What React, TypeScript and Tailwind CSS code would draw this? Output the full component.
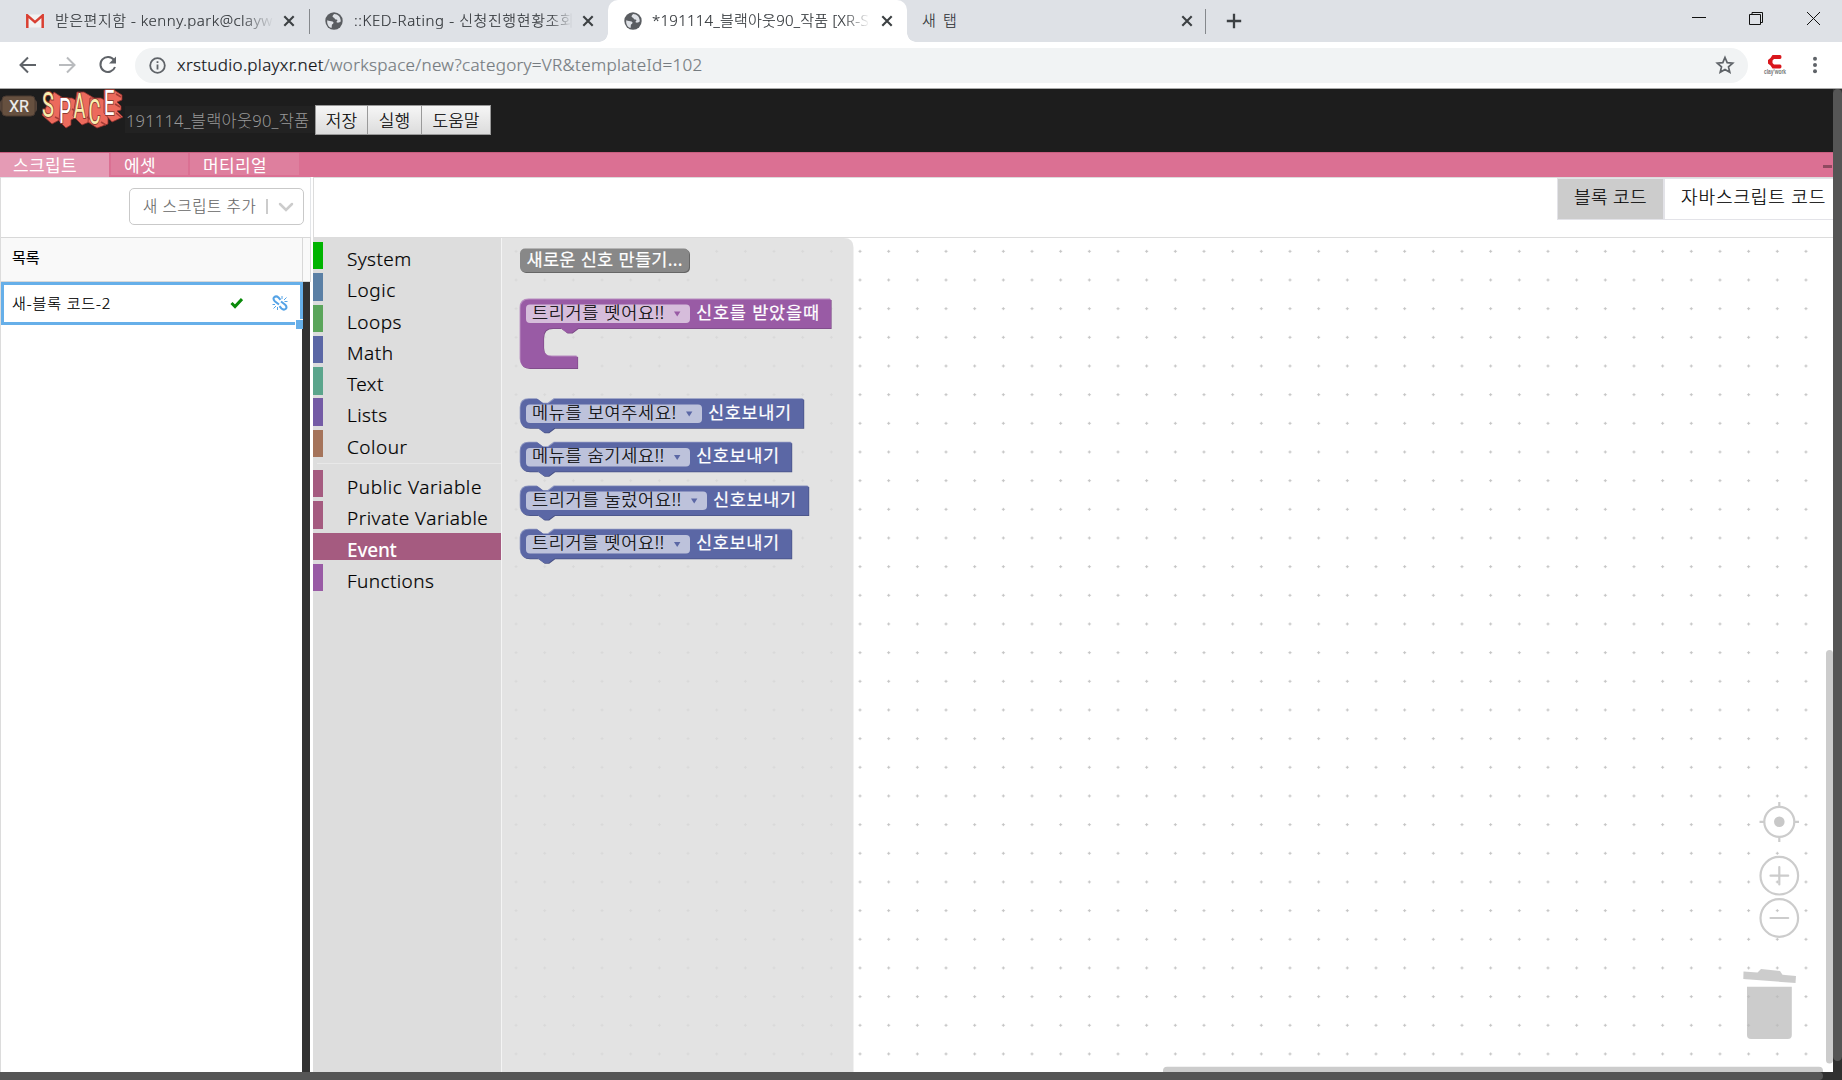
import React from "react";

const uiFont = "font-['Noto_Sans','Noto_Sans_CJK_KR',sans-serif]";

function Globe() {
  return (
    <svg width="18" height="18" viewBox="0 0 18 18" className="shrink-0">
      <circle cx="9" cy="9" r="8.7" fill="#5a5d61" />
      <path d="M2.3 8.2 C4 9.2 6 8.6 7.6 9.6 C9.4 10.6 8.2 12 7 12.6 C6.6 14 7 15.4 6.4 16 C3.6 15 1.6 12 2.3 8.2Z M9.2 2 C7.6 3.4 6.8 4.6 8.4 5.4 C9.6 5.6 9.6 7.2 11 7.4 C12.6 7.2 12.8 8.8 11.6 9.6 C10.8 10.4 12.6 10.8 13.6 10.6 C14.6 10.4 15 9.4 15.8 9.4 C15.8 5 13 2 9.2 2Z" fill="#dee1e6" />
    </svg>
  );
}

function TabClose() {
  return (
    <svg width="12" height="12" viewBox="0 0 12 12" className="shrink-0">
      <path d="M1.3 1.3 10.7 10.7M10.7 1.3 1.3 10.7" stroke="#3c4043" strokeWidth="2.1" />
    </svg>
  );
}

function TabStrip() {
  return (
    <div className="flex h-[42px] items-stretch bg-[#dee1e6] text-[15px] font-light text-[#303438] [-webkit-text-stroke:0.15px]">
      <div className="flex w-[309px] items-center pl-[26px]">
        <svg width="18" height="14" viewBox="0 0 18 14" className="shrink-0">
          <rect x="1" y="0.5" width="16" height="13" fill="#f2f2f2" />
          <path d="M1.3 14V1.4L9 8.2 16.7 1.4V14" fill="none" stroke="#d93f32" strokeWidth="2.5" />
        </svg>
        <span className="mb-[2px] ml-[11px] w-[219px] overflow-hidden tracking-[0.5px] whitespace-nowrap [mask-image:linear-gradient(to_right,black_85%,transparent)]">받은편지함 - kenny.park@clayw</span>
        <span className="ml-[9px] flex"><TabClose /></span>
      </div>
      <div className="h-[25px] w-px self-center bg-[#85888c]" />
      <div className="flex w-[298px] items-center pl-[15px]">
        <Globe />
        <span className="mb-[2px] ml-[11px] w-[219px] overflow-hidden tracking-[0.6px] whitespace-nowrap [mask-image:linear-gradient(to_right,black_90%,transparent)]">::KED-Rating - 신청진행현황조회</span>
        <span className="ml-[9px] flex"><TabClose /></span>
      </div>
      <div className="relative flex w-[299px] items-center rounded-t-[10px] bg-white pl-[16px]">
        <i className="absolute bottom-0 -left-[9px] size-[9px] bg-[radial-gradient(circle_at_0_0,transparent_8.5px,white_9px)]" />
        <i className="absolute -right-[9px] bottom-0 size-[9px] bg-[radial-gradient(circle_at_100%_0,transparent_8.5px,white_9px)]" />
        <Globe />
        <span className="mb-[2px] ml-[10px] w-[218px] overflow-hidden tracking-[0.25px] whitespace-nowrap [mask-image:linear-gradient(to_right,black_88%,transparent)]">*191114_블랙아웃90_작품 [XR-S</span>
        <span className="ml-[11px] flex"><TabClose /></span>
      </div>
      <div className="flex w-[298px] items-center justify-between pr-[12px] pl-[15px]">
        <span className="mb-[2px] tracking-[1.6px]">새 탭</span>
        <TabClose />
      </div>
      <div className="h-[25px] w-px self-center bg-[#85888c]" />
      <svg width="16" height="16" viewBox="0 0 16 16" className="ml-[20px] self-center">
        <path d="M8 .8V15.2M.8 8H15.2" stroke="#3c4043" strokeWidth="2.3" />
      </svg>
      <svg width="130" height="16" viewBox="0 0 130 16" className="mt-[10px] mr-[21px] ml-auto" fill="none" stroke="#111">
        <path d="M1 7.5H15" />
        <path d="M58.500 4.500H69.500V14.500H58.500ZM61 4.500V2.500H71.500V12.500H70" />
        <path d="M116 2 129 15M129 2 116 15" />
      </svg>
    </div>
  );
}

function AddressBar() {
  return (
    <div className="flex h-[47px] items-center border-b border-[#a9a9a9] bg-white">
      <svg width="102" height="24" viewBox="0 0 102 24" className="mr-[15px] ml-[18px]" fill="none" strokeWidth="2">
        <path d="M18 12H3M10 4.500 2.500 12 10 19.500" stroke="#5f6368" />
        <path d="M41 12H56M49 4.500 56.500 12 49 19.500" stroke="#b9bbbe" />
        <path d="M96 7A7.500 7.500 0 1 0 97 14" stroke="#5f6368" />
        <path d="M98 3.500V10.500H91Z" fill="#5f6368" />
      </svg>
      <div className="flex h-[35px] w-[1613px] items-center rounded-full bg-[#f1f3f4] pr-[13px] pl-[14px]">
        <svg width="17" height="17" viewBox="0 0 17 17" fill="none" stroke="#5f6368" strokeWidth="1.8">
          <circle cx="8.500" cy="8.500" r="7.300" />
          <path d="M8.500 7.500V12.500M8.500 4.300V6.100" />
        </svg>
        <span className="ml-[11px] text-[17px] font-light tracking-[0.32px] whitespace-nowrap text-[#757b80] [-webkit-text-stroke:0.2px]"><span className="text-[#101114]">xrstudio.playxr.net</span>/workspace/new?category=VR&amp;templateId=102</span>
        <svg width="20" height="20" viewBox="0 0 20 20" className="ml-auto">
          <path d="M10 2.500 12.200 7.700 17.700 8.200 13.500 11.900 14.800 17.300 10 14.400 5.200 17.300 6.500 11.900 2.300 8.200 7.800 7.700Z" fill="none" stroke="#5f6368" strokeWidth="1.700" />
        </svg>
      </div>
      <svg width="24" height="24" viewBox="0 0 24 24" className="ml-[15px]">
        <path d="M17 2H9.500L7.500 5 5 7V10.500L7.500 12.500 9.500 15.500H17Q18.500 15.500 18.500 13.500T17 11.500H11L9.500 10V7.500L11 6H17Q18.500 6 18.500 4T17 2Z" fill="#d9161c" />
        <text x="1" y="21" fontSize="7" fontWeight="700" textLength="22" lengthAdjust="spacingAndGlyphs" fill="#777" fontFamily="Liberation Sans">clay'work</text>
      </svg>
      <svg width="6" height="20" viewBox="0 0 6 20" className="ml-[25px]" fill="#5f6368">
        <circle cx="3" cy="3.700" r="2" /><circle cx="3" cy="10" r="2" /><circle cx="3" cy="16.300" r="2" />
      </svg>
    </div>
  );
}

const logoLetters = [
  { c: "S", x: 42, y: 28, w: 12, f: "#f8efb0" },
  { c: "P", x: 59, y: 34, w: 12, f: "#fff" },
  { c: "A", x: 73.5, y: 29, w: 12, f: "#f8efb0" },
  { c: "C", x: 88.5, y: 35, w: 12, f: "#f8efb0" },
  { c: "E", x: 104, y: 26, w: 10.5, f: "#fff" },
];

function Logo() {
  return (
    <svg width="125" height="40" viewBox="0 0 125 40" className="shrink-0 self-start">
      <rect x="0" y="11" width="37" height="12" rx="3" fill="#55443a" />
      <rect x="2" y="7" width="33" height="20" rx="4" fill="#66503f" stroke="#4a3a31" />
      <text x="9" y="22.500" fontSize="16" textLength="20" lengthAdjust="spacingAndGlyphs" fill="#eee" stroke="#eee" strokeWidth=".2" fontFamily="Roboto">XR</text>
      <g fill="#ec6a5c" stroke="#8e2f2c" strokeWidth=".8">
        <path d="M42 26 54 3 63 9V29L52 35Z" />
        <path d="M59 32 61 9 72 9 79 13V27L71 31V36L66 39Z" />
        <path d="M73 27 77 3 84 3 94 9V31L82 36Z" />
        <path d="M88 33 90 9 101 9 108 13V35L97 39Z" />
        <path d="M104 24V1L114 1 122 6V11L117 13 121 17V21L117 22 123 28 112 33Z" />
      </g>
      <path d="M55 28 61 31M72 20 77 23M87 28 92 31M101 33 106 36M116 5 121 8M115 15 120 18M116 24 121 28" stroke="#a63c36" strokeWidth="1.500" />
      <g fontFamily="Roboto" fontWeight="400" fontSize="35" stroke="#8e3a32" strokeWidth="2" paintOrder="stroke">
        {logoLetters.map((l) => (
          <text key={l.c} x={l.x} y={l.y} textLength={l.w} lengthAdjust="spacingAndGlyphs" fill={l.f}>{l.c}</text>
        ))}
      </g>
    </svg>
  );
}

function StudioHeader() {
  const button = "h-[30px] border border-[#999] bg-linear-to-b from-[#f6f6f6] to-[#dcdcdc] text-[17px] leading-[27px] font-light text-black [-webkit-text-stroke:0.2px]";
  return (
    <header className="flex h-[63px] bg-[#1d1d1d]">
      <Logo />
      <div className="mt-[17px] h-[27px] w-[190px] bg-[#222] pl-[1px] text-[16.500px] leading-[29px] font-light tracking-[0.2px] whitespace-nowrap text-[#999]">191114_블랙아웃90_작품</div>
      <div className="mt-4 flex">
        <button className={button + " w-[53px]"}>저장</button>
        <button className={button + " w-[54px] border-l-0"}>실행</button>
        <button className={button + " w-[69px] border-l-0"}>도움말</button>
      </div>
    </header>
  );
}

function SectionTabs() {
  return (
    <nav className="flex h-[25px] border-t border-[#c95f80] bg-[#db7093] text-[17px] leading-[25px] tracking-[0.4px] text-white">
      <div className="w-[109px] bg-[#e59bb5] pl-[13px]">스크립트</div>
      <div className="ml-[2px] h-[22px] w-[77px] bg-[#de7f9e] pl-[13px]">에셋</div>
      <div className="ml-[2px] h-[22px] w-[109px] bg-[#de7f9e] pl-[13px]">머티리얼</div>
      <div className="mt-[12px] mr-px ml-auto h-[3px] w-[9px] bg-[#8f4a60]" />
    </nav>
  );
}

function ScriptPanel() {
  return (
    <aside className="flex w-[311px] shrink-0 flex-col border-l border-[#dcdcdc]">
      <div className="flex h-[60px] justify-end border-t border-r border-[#e3e5e8] pt-[10px] pr-[6px]">
        <div className="flex h-[37px] w-[175px] items-center rounded-[5px] border border-[#c9c9c9] pl-[13px] text-[15.500px] font-light tracking-[0.6px] text-[#666] [-webkit-text-stroke:0.15px]">
          <span className="w-[123px] whitespace-nowrap">새 스크립트 추가</span>
          <span className="h-[15px] w-[2px] bg-[#ccc]" />
          <svg width="16" height="10" viewBox="0 0 16 10" className="ml-[10px]"><path d="M2 2 8 8 14 2" fill="none" stroke="#ccc" strokeWidth="2.500" strokeLinecap="round" /></svg>
        </div>
      </div>
      <div className="flex h-[45px] border-y border-r border-[#d8d8d8] bg-[#f9f9f9] text-[15px] leading-[39px] text-black">
        <div className="w-[302px] border-r border-[#d8d8d8] pl-[11px] [-webkit-text-stroke:0.2px]">목록</div>
      </div>
      <div className="flex flex-1">
        <div className="w-[301px]">
          <div className="relative flex h-[43px] w-[302px] items-center border-[3px] border-[#66afe9] pl-[8px] text-[15px] font-light text-black">
            <span className="mb-[1px] w-[218px] shrink-0 tracking-[0.9px] whitespace-nowrap [-webkit-text-stroke:0.2px]">새-블록 코드-2</span>
            <svg width="13" height="12" viewBox="0 0 13 12" className="mb-px shrink-0"><path d="M1.500 6 5 9.500 12 2" fill="none" stroke="#0a8a0a" strokeWidth="3" /></svg>
            <svg width="16" height="16" viewBox="0 0 16 16" className="mb-[2px] ml-[29px] shrink-0" fill="none" stroke="#55a3e6">
              <path d="M7 9.500 2.800 6.200Q.600 4 2.200 2.200 4.200.400 6.500 2.500L8.500 4.800M9 6.500 13.200 9.800Q15.400 12 13.800 13.800 11.800 15.600 9.500 13.500L7.500 11.200" strokeWidth="2" />
              <path d="M10 4V1M12 5 14.500 2.500M12.500 6.500H15.500M5.500 12V15M4 11 1.500 13.500M3 9.500H.500" strokeWidth="1" />
            </svg>
            <i className="absolute -right-[3px] -bottom-[7px] h-[10px] w-[8px] border-t border-l border-white bg-[#66afe9]" />
          </div>
        </div>
        <div className="w-[8px] bg-[#323232]" />
      </div>
    </aside>
  );
}

const categories = [
  { name: "System", bar: "bg-[#00b400]", tracking: "tracking-[0.4px]" },
  { name: "Logic", bar: "bg-[#5b80a5]", tracking: "tracking-[0.6px]" },
  { name: "Loops", bar: "bg-[#5ba55b]", tracking: "tracking-[0.5px]" },
  { name: "Math", bar: "bg-[#5b67a5]", tracking: "tracking-[0.5px]" },
  { name: "Text", bar: "bg-[#5ba58c]", tracking: "tracking-[0.5px]" },
  { name: "Lists", bar: "bg-[#745ba5]", tracking: "tracking-[0.4px]" },
  { name: "Colour", bar: "bg-[#a5745b]", tracking: "tracking-[0.5px]" },
  { name: "Public Variable", bar: "bg-[#a55b80]", tracking: "tracking-[0.6px]", gap: true },
  { name: "Private Variable", bar: "bg-[#a55b80]", tracking: "tracking-[0.5px]" },
  { name: "Event", bar: "bg-[#a55b80]", tracking: "tracking-[-0.2px]", active: true },
  { name: "Functions", bar: "bg-[#995ba5]", tracking: "tracking-[0.4px]" },
];

function Toolbox() {
  return (
    <div className="w-[189px] shrink-0 border-r border-[#f4f4f4] bg-[#ddd] pt-[4px]">
      {categories.map((c) => (
        <React.Fragment key={c.name}>
          {c.gap && <div className="mt-[6px] mb-[6px] ml-[4px] h-px bg-[#e8e8e8]" />}
          <div className={"mb-[3.900px] flex h-[27.400px] " + (c.active ? "bg-[#a55b80] font-medium text-white" : "font-light text-black [-webkit-text-stroke:0.2px]")}>
            <div className={"w-[10px] " + c.bar} />
            <span className={"ml-[24px] text-[19px] leading-[34px] whitespace-nowrap " + c.tracking}>{c.name}</span>
          </div>
        </React.Fragment>
      ))}
    </div>
  );
}

const sendBlocks = [
  { y: 399.1, right: 804, field: "메뉴를 보여주세요!", fieldEnd: 702, textW: 144, labelW: 83 },
  { y: 442.6, right: 792, field: "메뉴를 숨기세요!!", fieldEnd: 690, textW: 132, labelW: 83 },
  { y: 486.2, right: 809, field: "트리거를 눌렀어요!!", fieldEnd: 707, textW: 149, labelW: 83 },
  { y: 529.6, right: 792, field: "트리거를 뗏어요!!", fieldEnd: 690, textW: 132, labelW: 83 },
];

function Field({ y, end, textW, text, fill, accent }: { y: number; end: number; textW: number; text: string; fill: string; accent: string }) {
  return (
    <g>
      <rect x="526" y={y} width={end - 526} height="18.500" rx="4" fill={fill} />
      <text x="532" y={y + 14.300} textLength={textW} fontSize="17.500" fontWeight="300" fill="#000" stroke="#000" strokeWidth=".2">{text}</text>
      <path d={`M${end - 16} ${y + 7}h6.400l-3.200 5z`} fill={accent} />
    </g>
  );
}

function Canvas() {
  return (
    <svg width="1331" height="834" viewBox="502 238 1331 834" className="block shrink-0">
      <defs>
        <pattern id="dots" patternUnits="userSpaceOnUse" x="501.700" y="237" width="28.665" height="28.665">
          <path d="M12.800 14.330H15.900M14.330 12.800V15.900" stroke="#c4c4c4" strokeWidth="1.100" />
        </pattern>
      </defs>
      <rect x="502" y="238" width="1331" height="834" fill="#fff" />
      <rect x="502" y="238" width="1331" height="834" fill="url(#dots)" />
      <path d="M502 238H844Q853.500 238 853.500 247.500V1072H502Z" fill="#ddd" fillOpacity=".82" />

      <rect x="521" y="249.500" width="169" height="23.500" rx="5" fill="#666" />
      <rect x="520" y="248.500" width="169" height="23.500" rx="5" fill="#888" />
      <text x="526.500" y="265.500" textLength="156" fontSize="17.500" fill="#fff" stroke="#fff" strokeWidth=".2">새로운 신호 만들기...</text>

      <g>
        {[["#7a4984", 0.6], ["#b88cc0", -0.9], ["#995ba5", 0]].map(([color, d]) => (
          <path key={color} transform={`translate(${d} ${d})`} fill={color as string}
            d="M520.500 308.500Q520.500 299.500 529.500 299.500H831V328.300H578L572 332.800H567L561 328.300H552.500Q543.500 328.300 543.500 337.500V347.500Q543.500 356.500 552.500 356.500H577.500V368.300H529.500Q520.500 368.300 520.500 359.500Z" />
        ))}
        <Field y={304.5} end={690} textW={132} text="트리거를 뗏어요!!" fill="#d6bddb" accent="#995ba5" />
        <text x="696" y="318.700" textLength="123" fontSize="17.500" fill="#fff" stroke="#fff" strokeWidth=".2">신호를 받았을때</text>
      </g>

      {sendBlocks.map((b) => (
        <g key={b.y}>
          {[["#495284", 0.7], ["#8c95c0", -0.8], ["#5b67a5", 0]].map(([color, d]) => (
            <path key={color} transform={`translate(${d} ${b.y + (d as number)})`} fill={color as string}
              d={`M520.500 9Q520.500 0 529.500 0H537.500L543.500 4.500H548.500L554.500 0H${b.right - 0.5}V29H554.500L548.500 33.500H544L538 29H529.500Q520.500 29 520.500 20Z`} />
          ))}
          <Field y={b.y + 5.3} end={b.fieldEnd} textW={b.textW} text={b.field} fill="#bdc2db" accent="#5b67a5" />
          <text x={b.fieldEnd + 6} y={b.y + 19.500} textLength={b.labelW} fontSize="17.500" fill="#fff" stroke="#fff" strokeWidth=".2">신호보내기</text>
        </g>
      ))}

      <g fill="none" stroke="#ccc" strokeWidth="2.200">
        <circle cx="1779.300" cy="821.800" r="15" />
        <path d="M1779.300 802V807M1779.300 837V842M1759.500 821.800H1764.500M1794 821.800H1799" />
        <circle cx="1779.300" cy="875.700" r="18.800" />
        <circle cx="1779.300" cy="918" r="18.800" />
        <path d="M1770.500 875.700H1788.200M1779.300 867V884.500M1770.500 918H1788.200" strokeLinecap="round" />
      </g>
      <circle cx="1779.300" cy="821.800" r="5.300" fill="#c8c8c8" />
      <g fill="#bbb" fillOpacity=".75">
        <path d="M1743.500 971.500 1757.500 972.500 1761 969 1780 971 1782.500 974.700 1796 976 1795.500 983 1743.300 979Z" />
        <path d="M1747 986.700H1791.800V1035Q1791.800 1039 1787.800 1039H1751Q1747 1039 1747 1035Z" />
      </g>
      <rect x="1826" y="650" width="7" height="413.500" rx="3.500" fill="#ccc" />
      <rect x="1163" y="1066.800" width="660" height="8" rx="4" fill="#ccc" />
    </svg>
  );
}

function Workspace() {
  return (
    <main className="ml-[2px] flex w-[1520px] flex-col">
      <div className="flex h-[61px] justify-end border-t border-b border-l border-[#dcdcdc] bg-white font-light [-webkit-text-stroke:0.2px]">
        <div className="h-[42px] w-[107px] border border-[#e3e3e8] bg-[#ccc] text-center text-[18px] leading-[37px] tracking-[0.4px] text-black">블록 코드</div>
        <div className="h-[42px] w-[169px] border-y border-l border-[#e3e3e8] pl-[16px] text-[18px] leading-[37px] tracking-[0.9px] whitespace-nowrap text-black">자바스크립트 코드</div>
      </div>
      <div className="flex h-[834px]">
        <Toolbox />
        <Canvas />
      </div>
    </main>
  );
}

export default function App() {
  return (
    <div className={"h-[1080px] w-[1842px] overflow-hidden bg-white " + uiFont}>
      <TabStrip />
      <AddressBar />
      <div className="flex h-[983px]">
        <div className="w-[1833px] shrink-0">
          <StudioHeader />
          <SectionTabs />
          <div className="flex h-[895px]">
            <ScriptPanel />
            <Workspace />
          </div>
        </div>
        <div className="w-[9px] bg-[#303030]">
          <div className="h-[972px] rounded-full bg-[#555]" />
        </div>
      </div>
      <div className="h-[8px] bg-[#303030]">
        <div className="h-[8px] w-[1823px] rounded-r-full bg-[#555]" />
      </div>
    </div>
  );
}
